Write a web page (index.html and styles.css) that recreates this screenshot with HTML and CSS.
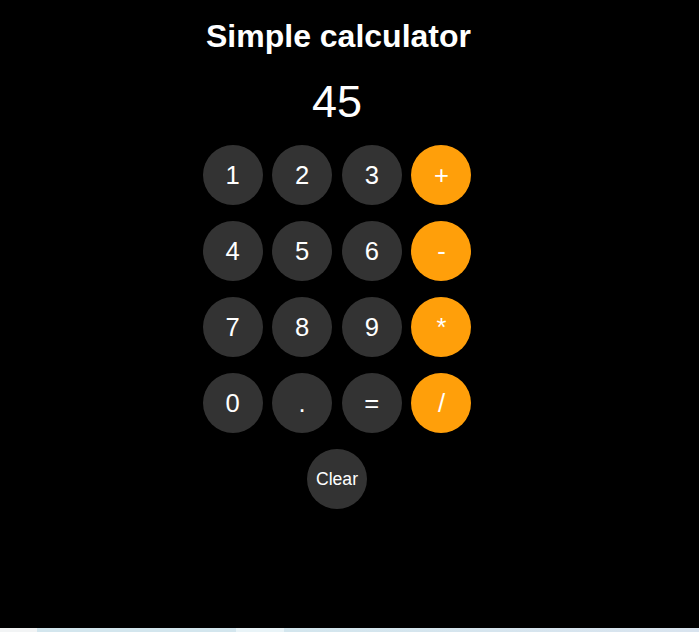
FILE: index.html
```html
<!DOCTYPE html>
<html lang="en">
<head>
<meta charset="utf-8">
<title>Simple calculator</title>
<link rel="stylesheet" href="styles.css">
</head>
<body>
<main class="app">
  <h1 class="title">Simple calculator</h1>
  <div class="display">45</div>
  <div class="keys">
    <button class="key">1</button>
    <button class="key">2</button>
    <button class="key">3</button>
    <button class="key op">+</button>
    <button class="key">4</button>
    <button class="key">5</button>
    <button class="key">6</button>
    <button class="key op">-</button>
    <button class="key">7</button>
    <button class="key">8</button>
    <button class="key">9</button>
    <button class="key op">*</button>
    <button class="key">0</button>
    <button class="key">.</button>
    <button class="key">=</button>
    <button class="key op">/</button>
    <button class="key clear">Clear</button>
  </div>
</main>
<div class="strip">
  <span class="strip-a"></span>
  <span class="strip-b"></span>
  <span class="strip-c"></span>
  <span class="strip-d"></span>
</div>
</body>
</html>
```
FILE: styles.css
```css
html, body {
  margin: 0;
  padding: 0;
  background: #000;
  height: 100%;
}
body {
  font-family: "Liberation Sans", Arial, sans-serif;
  color: #fff;
}
.app {
  width: 674px;
  display: flex;
  flex-direction: column;
  align-items: center;
  padding-top: 18px;
}
.title {
  margin: 0;
  padding-left: 3px;
  font-size: 32px;
  font-weight: bold;
  line-height: 37px;
}
.display {
  margin-top: 21px;
  font-size: 45px;
  line-height: 52px;
}
.keys {
  margin-top: 17px;
  display: grid;
  grid-template-columns: repeat(4, 60px);
  column-gap: 9.67px;
  row-gap: 16px;
}
.key {
  width: 60px;
  height: 60px;
  border: none;
  border-radius: 50%;
  background: #333333;
  color: #fff;
  font-family: "Liberation Sans", Arial, sans-serif;
  font-size: 25.6px;
  padding: 0;
  display: flex;
  align-items: center;
  justify-content: center;
}
.op {
  background: #ff9f0a;
}
.clear {
  grid-column: 1 / -1;
  justify-self: center;
  font-size: 17.6px;
}
.strip {
  position: fixed;
  left: 0;
  right: 0;
  bottom: 0;
  height: 4px;
  display: flex;
}
.strip-a { width: 37px; background: #f2f4f5; }
.strip-b { width: 199px; background: #d3e6ee; }
.strip-c { width: 48px; background: #e9f4f8; }
.strip-d { flex: 1; background: linear-gradient(90deg, #d3e6ee, #d9e4ef); }
```
